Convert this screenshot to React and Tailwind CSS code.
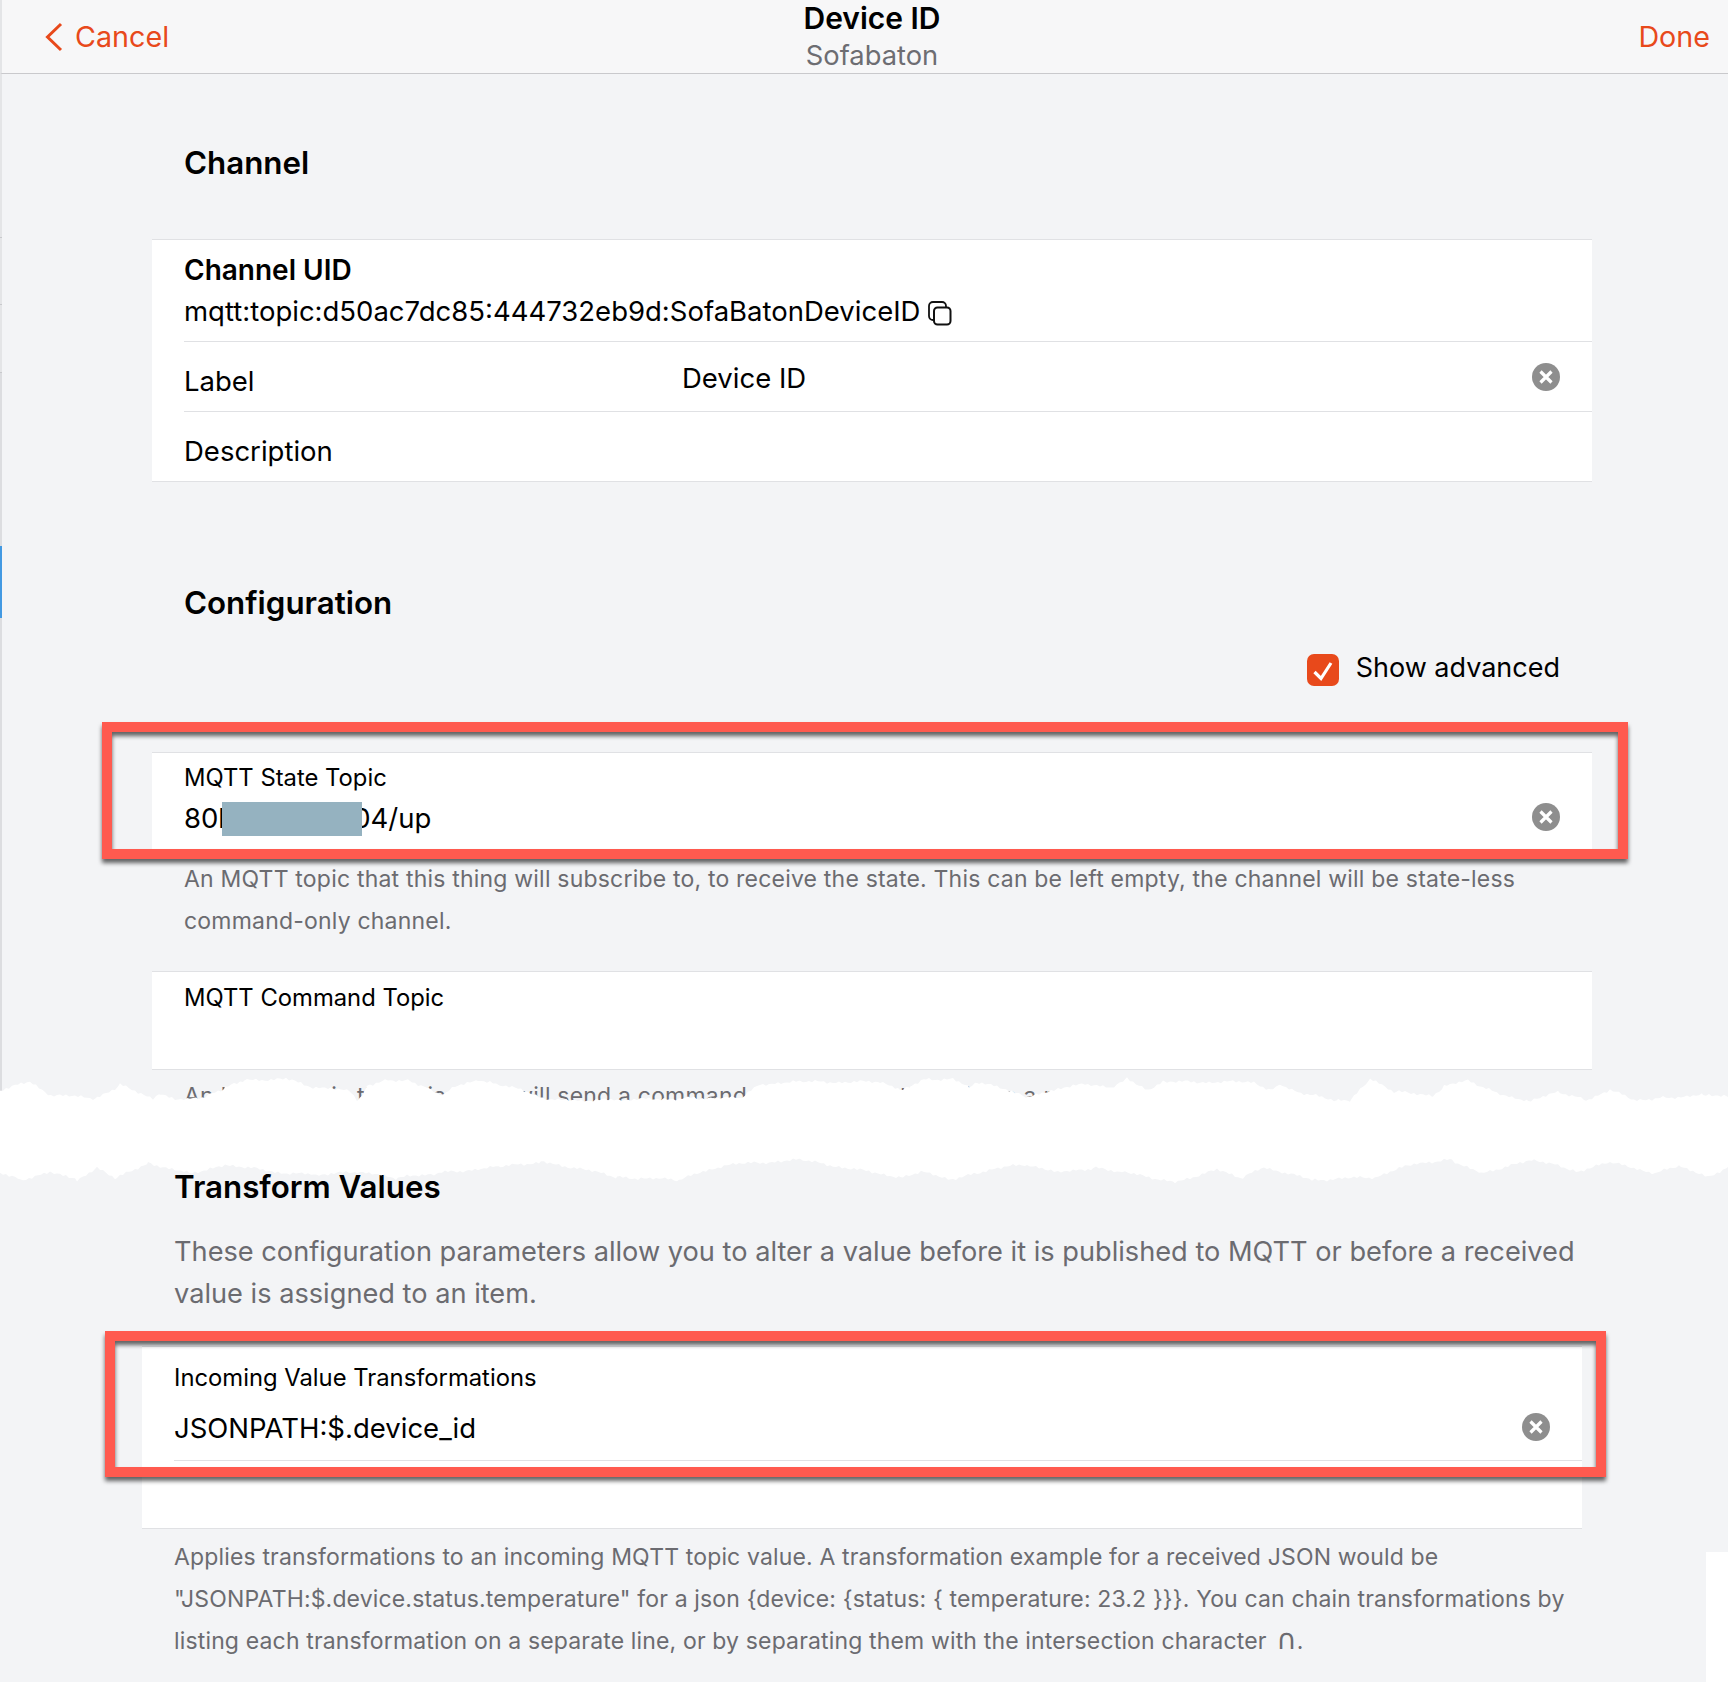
import React from "react";

const topEdge = [[0,1090],[30,1082],[51,1095],[97,1098],[120,1085],[153,1098],[160,1093],[175,1099],[187,1100],[206,1097],[225,1088],[244,1080],[286,1079],[313,1087],[332,1088],[351,1091],[357,1100],[363,1096],[367,1085],[390,1080],[409,1080],[428,1088],[443,1095],[455,1087],[478,1080],[497,1085],[524,1090],[543,1098],[566,1100],[619,1100],[696,1098],[742,1098],[760,1084],[800,1082],[880,1082],[900,1090],[926,1079],[953,1079],[969,1088],[979,1082],[1016,1093],[1027,1097],[1058,1090],[1085,1083],[1111,1088],[1127,1078],[1148,1090],[1164,1082],[1254,1082],[1270,1090],[1280,1084],[1301,1093],[1338,1101],[1351,1100],[1370,1079],[1396,1092],[1433,1095],[1444,1087],[1468,1080],[1497,1093],[1528,1101],[1560,1092],[1586,1100],[1610,1090],[1634,1100],[1660,1098],[1703,1095],[1728,1097]];
const botEdge = [[0,1172],[20,1180],[51,1172],[77,1180],[97,1168],[117,1178],[148,1163],[189,1173],[230,1165],[275,1172],[316,1175],[357,1172],[398,1178],[439,1173],[500,1167],[541,1162],[577,1168],[617,1177],[679,1180],[724,1165],[800,1160],[900,1177],[921,1172],[953,1180],[995,1168],[1027,1165],[1058,1173],[1093,1168],[1122,1172],[1175,1182],[1217,1170],[1243,1178],[1264,1167],[1312,1180],[1375,1177],[1417,1163],[1452,1160],[1481,1173],[1534,1160],[1581,1172],[1607,1162],[1655,1173],[1681,1166],[1708,1178],[1728,1167]];

function wobble(points) {
  const out = [];
  for (let i = 0; i < points.length - 1; i++) {
    const [x0, y0] = points[i];
    const [x1, y1] = points[i + 1];
    for (let x = x0; x < x1; x += 3) {
      const t = (x - x0) / (x1 - x0);
      const n = Math.sin(x * 0.83) * 1.0 + Math.sin(x * 1.97 + 1) * 0.8 + Math.sin(x * 0.29) * 0.5;
      out.push([x, y0 + (y1 - y0) * t + n]);
    }
  }
  out.push(points[points.length - 1]);
  return out;
}
const top = wobble(topEdge);
const bot = wobble(botEdge).reverse();
const tornPath =
  "M" + top.concat(bot).map(([x, y]) => `${x} ${(y - 1070).toFixed(1)}`).join("L") + "Z";

function ClearIcon() {
  return (
    <svg width="28" height="28" viewBox="0 0 28 28" className="shrink-0">
      <circle cx="14" cy="14" r="14" fill="#8e8e8e" />
      <path d="M8.5 8.5L19.5 19.5M19.5 8.5L8.5 19.5" stroke="#fff" strokeWidth="3.2" />
    </svg>
  );
}

function CopyIcon() {
  return (
    <svg width="24" height="25" viewBox="0 0 24 25" fill="none" className="ml-[8px] mt-[4px] shrink-0">
      <rect x="1" y="1" width="17" height="18" rx="4" stroke="#111" strokeWidth="1.8" />
      <rect x="6" y="6.5" width="16.5" height="17" rx="3.5" fill="#fff" stroke="#111" strokeWidth="2" />
    </svg>
  );
}

function RedBox({ className }) {
  return (
    <div
      className={
        "absolute z-10 border-[10px] border-[#ff5a4f] [filter:drop-shadow(0_4px_2px_rgba(0,0,0,0.6))] " + className
      }
    />
  );
}

const help = "text-[23px] leading-[42px] text-[#6b6b70] tracking-[0.15px]";
const helpWide = "text-[23px] leading-[42px] text-[#6b6b70] tracking-[0.2px]";
const label = "text-[23.8px] leading-[28px] text-black";
const value = "text-[27.5px] leading-[36px] text-black";
const heading = "text-[31.3px] leading-[40px] font-semibold text-black";

export default function App() {
  return (
    <div className="relative w-[1728px] h-[1682px] overflow-hidden bg-[#f3f4f6] font-['Inter','DejaVu_Sans',sans-serif]">
      <header className="grid grid-cols-[742px_256px_1fr] h-[74px] border-b border-l-2 border-b-[#c9c9cc] border-l-[#e4e5e7] bg-[#f7f7f8]">
        <div className="flex items-center gap-[12px] pl-[43px] text-[#e8491b]">
          <svg width="18" height="30" viewBox="0 0 18 30" fill="none">
            <path d="M16 2L2.5 15L16 28" stroke="#e8491b" strokeWidth="3" />
          </svg>
          <span className="text-[28.7px] leading-[36px]">Cancel</span>
        </div>
        <div className="flex flex-col items-center pt-[3px]">
          <div className="text-[30px] leading-[30px] font-semibold text-black">Device ID</div>
          <div className="mt-[8px] text-[27.3px] leading-[30px] text-[#6d6d72]">Sofabaton</div>
        </div>
        <div className="flex items-center justify-end pr-[18px] text-[28.7px] leading-[36px] text-[#e8491b]">Done</div>
      </header>

      <div className="flex h-[1056px] overflow-hidden">
        <aside className="flex w-[2px] shrink-0 flex-col bg-[#dcdde0]">
          <div className="h-[164px] shrink-0 border-b border-[#c8c9cc] bg-[#e4e5e7]" />
          <div className="h-[67px] shrink-0 border-b border-[#c8c9cc] bg-[#e4e5e7]" />
          <div className="h-[68px] shrink-0 border-b border-[#c8c9cc] bg-[#e4e5e7]" />
          <div className="h-[173px] shrink-0" />
          <div className="h-[72px] shrink-0 bg-[#4299e2]" />
        </aside>

        <main className="w-[1440px] ml-[150px] shrink-0">
          <div className="h-[165px] pl-[32px] pt-[69px]">
            <h2 className={heading}>Channel</h2>
          </div>

          <section className="h-[243px] border-y border-[#e0e1e4] bg-white">
            <div className="h-[101px] pl-[32px] pt-[14px]">
              <div className="text-[28px] leading-[32px] font-semibold text-black">Channel UID</div>
              <div className="mt-[7px] flex items-center">
                <span className={value}>mqtt:topic:d50ac7dc85:444732eb9d:SofaBatonDeviceID</span>
                <CopyIcon />
              </div>
            </div>
            <div className="ml-[32px] flex h-[70px] items-center border-t border-[#e0e1e4]">
              <span className="w-[498px] pt-[8px] text-[27.5px] leading-[36px] text-black">Label</span>
              <span className="flex-1 pt-[2px] text-[27.5px] leading-[36px] text-black">Device ID</span>
              <div className="mr-[32px]"><ClearIcon /></div>
            </div>
            <div className="ml-[32px] flex h-[70px] items-center border-t border-[#e0e1e4]">
              <span className="pt-[8px] text-[27.5px] leading-[36px] text-black">Description</span>
            </div>
          </section>

          <div className="h-[270px] pt-[101px]">
            <h2 className={"pl-[32px] " + heading}>Configuration</h2>
            <div className="mt-[31px] flex items-center justify-end pr-[32px]">
              <span className="flex h-[32px] w-[32px] items-center justify-center rounded-[7px] bg-[#e8491b]">
                <svg width="32" height="32" viewBox="0 0 32 32" fill="none">
                  <path d="M7.5 18L14 24.5L24 9" stroke="#fff" strokeWidth="3.2" />
                </svg>
              </span>
              <span className="ml-[17px] -mt-[4px] text-[27px] leading-[36px] text-black">Show advanced</span>
            </div>
          </div>

          <section className="relative h-[98px] border-t border-[#e0e1e4] bg-white pl-[32px] pt-[11px]">
            <div className={label}>MQTT State Topic</div>
            <div className={"relative mt-[8px] flex " + value}>
              <span>80b</span>
              <span className="w-[118px] shrink-0" />
              <span>04/up</span>
              <div className="absolute left-[38px] top-[2px] h-[34px] w-[140px] bg-[#95b2c0]" />
            </div>
            <div className="absolute right-[32px] top-[50px]"><ClearIcon /></div>
            <RedBox className="-left-[50px] -top-[31px] h-[137px] w-[1526px]" />
          </section>

          <p className={"mt-[8px] pl-[32px] " + helpWide}>
            An MQTT topic that this thing will subscribe to, to receive the state. This can be left empty, the channel will be state-less
            <br />
            command-only channel.
          </p>

          <section className="mt-[29px] h-[99px] border-y border-[#e0e1e4] bg-white pl-[32px] pt-[12px]">
            <div className={label}>MQTT Command Topic</div>
          </section>

          <p className={"mt-[5px] pl-[32px] " + helpWide}>
            An MQTT topic that this thing will send a command to. If not set, this will be a read-only switch.
          </p>
        </main>
      </div>

      <div className="pl-[142px] pt-[37px]">
        <div className="w-[1440px]">
          <h2 className={"pl-[32px] " + heading}>Transform Values</h2>
          <p className="mt-[24px] pl-[32px] text-[27.2px] leading-[42px] text-[#6b6b70]">
            These configuration parameters allow you to alter a value before it is published to MQTT or before a received
            <br />
            value is assigned to an item.
          </p>
          <section className="relative mt-[31px] h-[183px] border-y border-[#e0e1e4] bg-white pl-[32px] pt-[17px]">
            <div className={label}>Incoming Value Transformations</div>
            <div className={"mt-[18px] " + value}>JSONPATH:$.device_id</div>
            <div className="mt-[14px] border-t border-[#e0e1e4]" />
            <div className="absolute right-[32px] top-[66px]"><ClearIcon /></div>
            <RedBox className="-left-[37px] -top-[16px] h-[146px] w-[1501px]" />
          </section>
          <p className={"mt-[7px] pl-[32px] " + help}>
            Applies transformations to an incoming MQTT topic value. A transformation example for a received JSON would be
            <br />
            "JSONPATH:$.device.status.temperature" for a json {"{device: {status: { temperature: 23.2 }}}"}. You can chain transformations by
            <br />
            listing each transformation on a separate line, or by separating them with the intersection character <span className="ml-[3px] font-['DejaVu_Sans'] text-[28px] leading-[0]">∩</span>.
          </p>
        </div>
      </div>

      <svg className="absolute left-0 top-[1070px] z-20" width="1728" height="120" viewBox="0 0 1728 120">
        <path d={tornPath} fill="#fff" />
      </svg>
      <div className="absolute right-0 top-[1552px] bottom-0 z-20 w-[22px] bg-white" />
    </div>
  );
}
